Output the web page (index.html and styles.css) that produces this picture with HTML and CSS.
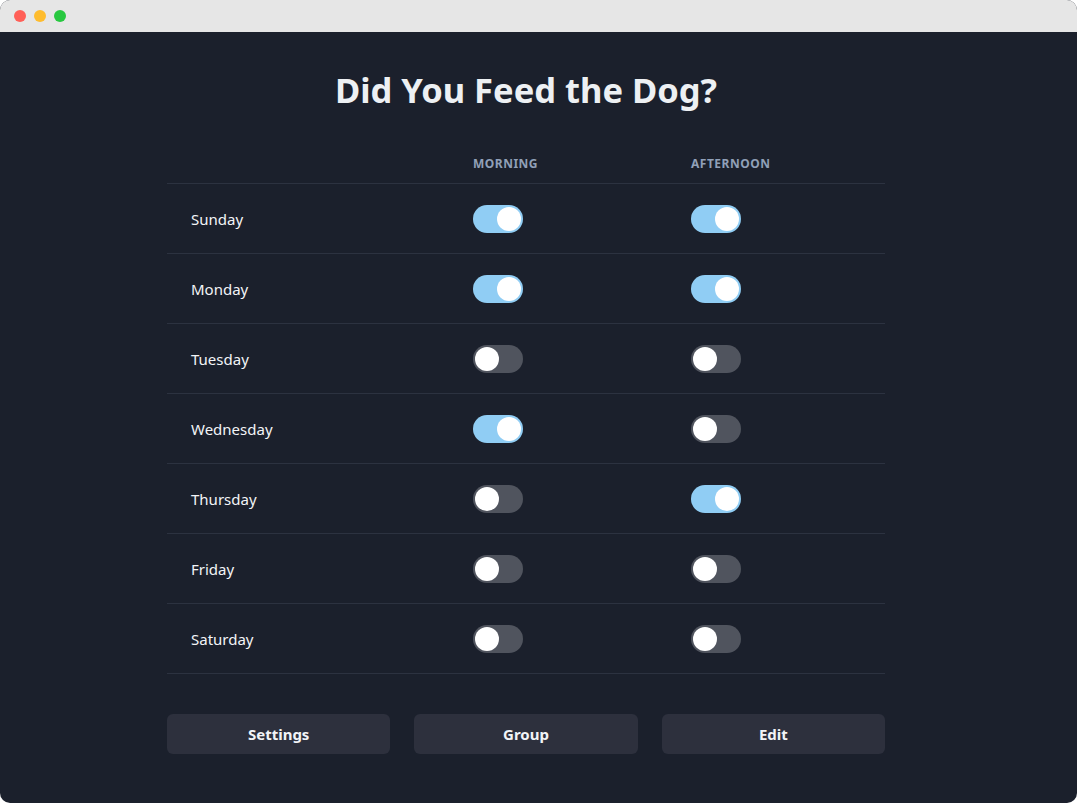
FILE: index.html
```html
<!DOCTYPE html>
<html>
<head>
<meta charset="utf-8">
<link rel="stylesheet" href="styles.css">
</head>
<body>
<div class="window">
  <div class="titlebar">
    <span class="light red"></span>
    <span class="light yellow"></span>
    <span class="light green"></span>
  </div>
  <div class="content">
    <h1 class="title">Did You Feed the Dog?</h1>
    <div class="table">
      <div class="row head">
        <div class="cell"></div>
        <div class="cell">MORNING</div>
        <div class="cell">AFTERNOON</div>
      </div>
      <div class="row">
        <div class="cell day">Sunday</div>
        <div class="cell"><span class="toggle on"></span></div>
        <div class="cell"><span class="toggle on"></span></div>
      </div>
      <div class="row">
        <div class="cell day">Monday</div>
        <div class="cell"><span class="toggle on"></span></div>
        <div class="cell"><span class="toggle on"></span></div>
      </div>
      <div class="row">
        <div class="cell day">Tuesday</div>
        <div class="cell"><span class="toggle"></span></div>
        <div class="cell"><span class="toggle"></span></div>
      </div>
      <div class="row">
        <div class="cell day">Wednesday</div>
        <div class="cell"><span class="toggle on"></span></div>
        <div class="cell"><span class="toggle"></span></div>
      </div>
      <div class="row">
        <div class="cell day">Thursday</div>
        <div class="cell"><span class="toggle"></span></div>
        <div class="cell"><span class="toggle on"></span></div>
      </div>
      <div class="row">
        <div class="cell day">Friday</div>
        <div class="cell"><span class="toggle"></span></div>
        <div class="cell"><span class="toggle"></span></div>
      </div>
      <div class="row last">
        <div class="cell day">Saturday</div>
        <div class="cell"><span class="toggle"></span></div>
        <div class="cell"><span class="toggle"></span></div>
      </div>
    </div>
    <div class="actions">
      <button class="btn">Settings</button>
      <button class="btn">Group</button>
      <button class="btn">Edit</button>
    </div>
  </div>
</div>
</body>
</html>
```
FILE: styles.css
```css
html, body {
  margin: 0;
  padding: 0;
  background: #ffffff;
}
body {
  font-family: "Noto Sans", "Open Sans", sans-serif;
}
.window {
  width: 1077px;
  height: 803px;
  border-radius: 10px;
  overflow: hidden;
  background: #1b202c;
  display: flex;
  flex-direction: column;
}
.titlebar {
  height: 32px;
  background: #e6e6e6;
  display: flex;
  align-items: center;
  gap: 8px;
  padding-left: 14px;
  flex-shrink: 0;
}
.light {
  width: 12px;
  height: 12px;
  border-radius: 50%;
}
.red { background: #ff5f57; }
.yellow { background: #febc2e; }
.green { background: #28c840; }
.content {
  width: 718px;
  margin: 0 0 0 167px;
  display: flex;
  flex-direction: column;
}
.title {
  margin: 36px 0 32px;
  text-align: center;
  font-size: 34.5px;
  line-height: 44px;
  font-weight: 700;
  color: #edf0f3;
}
.table {
  display: flex;
  flex-direction: column;
}
.row {
  display: grid;
  grid-template-columns: 282px 218px 218px;
  height: 70px;
  align-items: center;
  border-top: 1px solid #2c3240;
  box-sizing: border-box;
}
.row.last {
  height: 71px;
  border-bottom: 1px solid #2c3240;
}
.row.head {
  height: 39px;
  border-top: none;
  font-size: 12px;
  font-weight: 700;
  letter-spacing: 0.5px;
  color: #91a0b8;
}
.cell {
  padding-left: 24px;
  display: flex;
  align-items: center;
}
.day {
  font-size: 15px;
  color: #f2f4f7;
}
.toggle {
  width: 50px;
  height: 28px;
  border-radius: 14px;
  background: #50545e;
  position: relative;
  box-sizing: border-box;
}
.toggle::after {
  content: "";
  position: absolute;
  top: 2px;
  left: 2px;
  width: 24px;
  height: 24px;
  border-radius: 50%;
  background: #ffffff;
}
.toggle.on {
  background: #90cdf4;
}
.toggle.on::after {
  left: 24px;
}
.actions {
  margin-top: 40px;
  display: grid;
  grid-template-columns: 1fr 1fr 1fr;
  gap: 24px;
}
.btn {
  height: 40px;
  border: none;
  border-radius: 6px;
  background: #2d303d;
  color: #f2f4f7;
  font-family: inherit;
  font-size: 15px;
  font-weight: 700;
}
```
